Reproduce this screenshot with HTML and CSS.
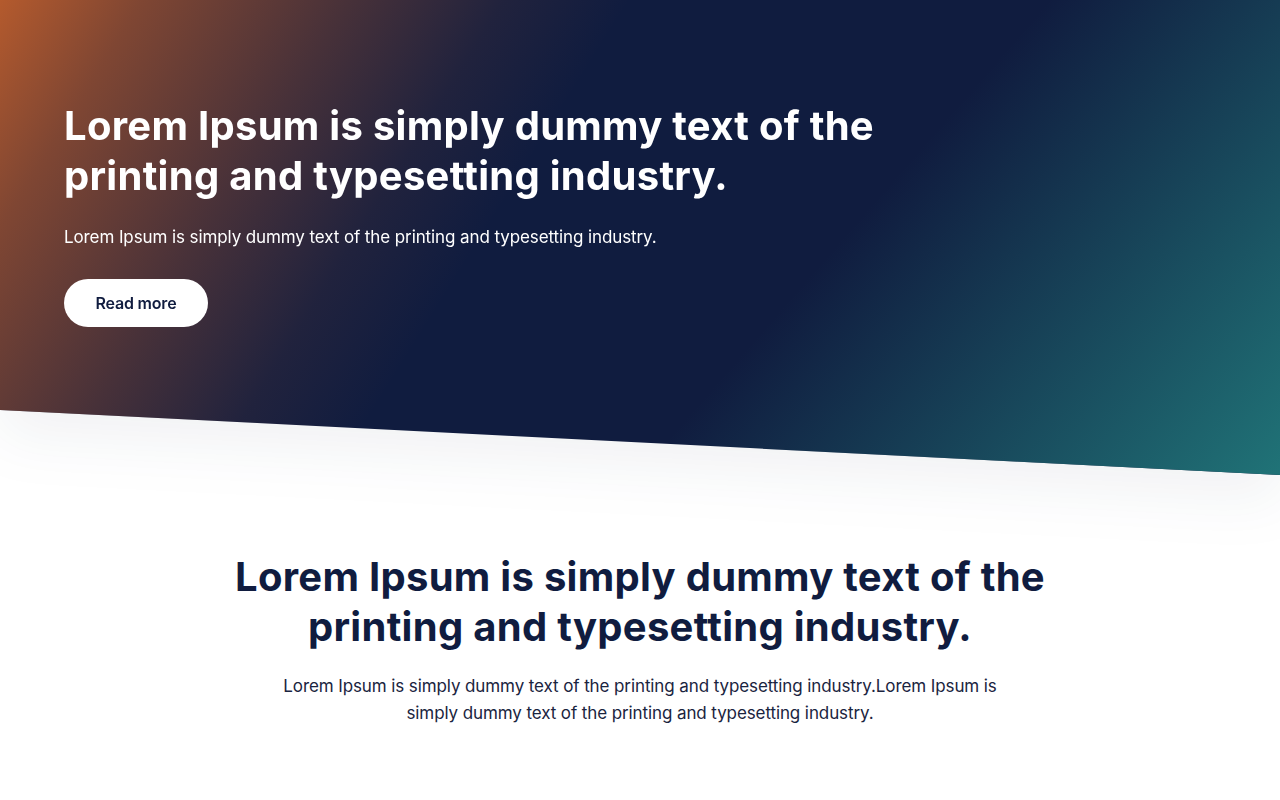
FILE: index.html
```html
<!DOCTYPE html>
<html lang="en">
<head>
<meta charset="utf-8">
<title>Hero</title>
<link rel="stylesheet" href="styles.css">
</head>
<body>
<header class="hero-wrap">
  <div class="hero">
    <div class="hero-inner">
      <h1 class="hero-title">Lorem Ipsum is simply dummy text of the printing and typesetting industry.</h1>
      <p class="hero-text">Lorem Ipsum is simply dummy text of the printing and typesetting industry.</p>
      <a class="btn" href="#">Read more</a>
    </div>
  </div>
</header>
<section class="intro">
  <h2 class="intro-title">Lorem Ipsum is simply dummy text of the printing and typesetting industry.</h2>
  <p class="intro-text">Lorem Ipsum is simply dummy text of the printing and typesetting industry.Lorem Ipsum is simply dummy text of the printing and typesetting industry.</p>
</section>
</body>
</html>
```
FILE: styles.css
```css
* { box-sizing: border-box; }
html, body { margin: 0; padding: 0; background: #ffffff; }
body {
  font-family: Inter, "Noto Sans", "Liberation Sans", sans-serif;
  color: #101c3f;
  overflow: hidden;
}
.hero-wrap {
  filter: drop-shadow(0 24px 28px rgba(16, 28, 63, 0.06));
}
.hero {
  height: 475px;
  clip-path: polygon(0 0, 100% 0, 100% 475px, 0 410px);
  background:
    linear-gradient(122deg, rgba(180, 90, 45, 1) 0%, rgba(180, 90, 45, 0.68) 9%, rgba(180, 90, 45, 0.34) 22%, rgba(180, 90, 45, 0.1) 32%, rgba(180, 90, 45, 0) 40%),
    linear-gradient(131deg, rgba(32, 115, 119, 0) 62%, rgba(32, 115, 119, 1) 100%),
    #101c3f;
  padding: 101px 64px 0;
}
.hero-inner { max-width: 860px; }
.hero-title {
  margin: 0 0 22px;
  font-size: 40px;
  line-height: 50px;
  font-weight: 700;
  color: #ffffff;
  letter-spacing: 0.28px;
}
.hero-text {
  margin: 0 0 28px;
  font-size: 17px;
  line-height: 28px;
  font-weight: 400;
  color: #ffffff;
  letter-spacing: -0.1px;
}
.btn {
  display: inline-flex;
  align-items: center;
  justify-content: center;
  height: 48px;
  width: 144px;
  border-radius: 24px;
  background: #ffffff;
  color: #101c3f;
  font-size: 16px;
  font-weight: 600;
  letter-spacing: -0.2px;
  text-decoration: none;
}
.intro {
  padding: 77px 0 0;
  display: flex;
  flex-direction: column;
  align-items: center;
  text-align: center;
}
.intro-title {
  margin: 0 0 21px;
  max-width: 860px;
  font-size: 40px;
  line-height: 50px;
  font-weight: 700;
  color: #101c3f;
  letter-spacing: 0.28px;
}
.intro-text {
  margin: 0;
  max-width: 730px;
  font-size: 17px;
  line-height: 27px;
  color: #1a2440;
  letter-spacing: -0.1px;
}
```
